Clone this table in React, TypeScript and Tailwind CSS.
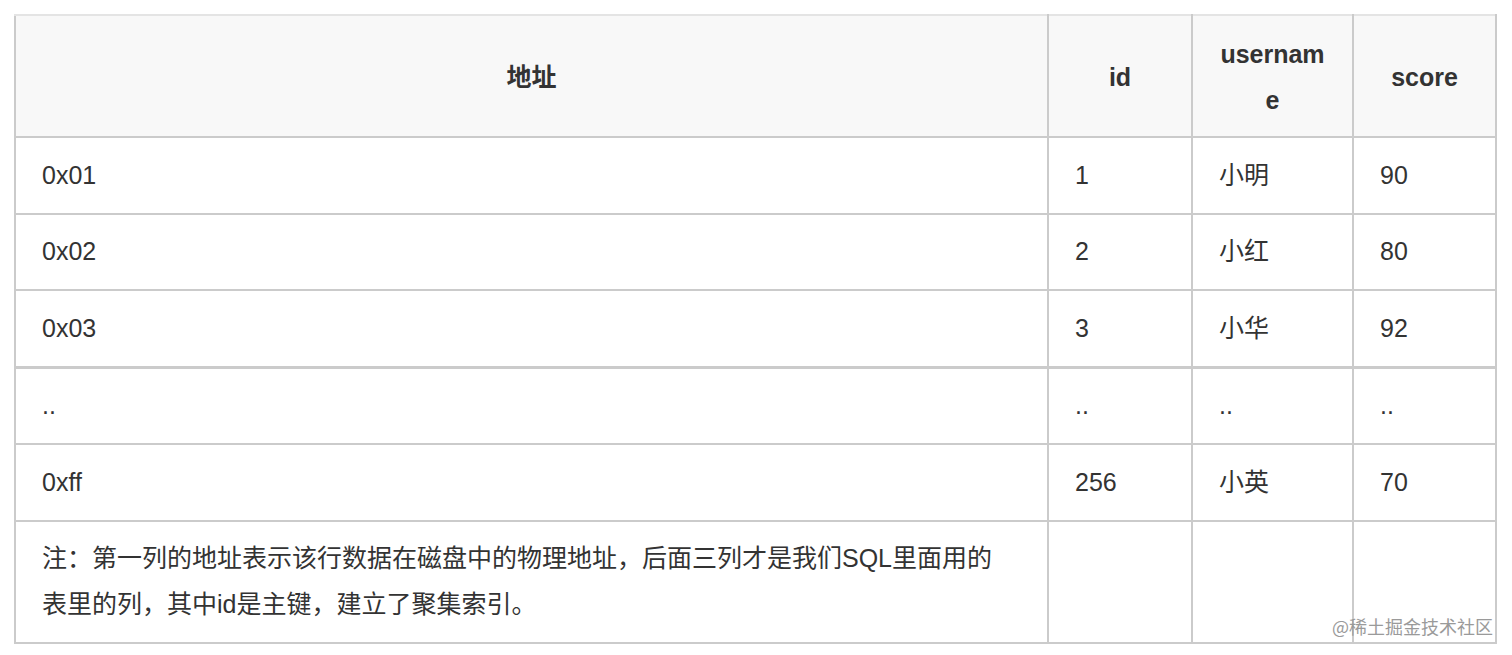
import React from "react";

const rows: [string, string, string, string][] = [
  ["0x01", "1", "小明", "90"],
  ["0x02", "2", "小红", "80"],
  ["0x03", "3", "小华", "92"],
  ["..", "..", "..", ".."],
  ["0xff", "256", "小英", "70"],
];

const td = "border-2 border-[#cbcbcb] px-[26px] py-[14.5px] align-middle";

export default function App() {
  return (
    <div
      className="relative min-h-[655px] w-[1512px] bg-white text-[#333333]"
      style={{ fontFamily: '"Liberation Sans", "Noto Sans CJK SC", sans-serif' }}
    >
      <div className="pl-[14px] pt-[14px]">
        <table className="w-[1481px] table-fixed border-collapse text-[25px] leading-[45.5px]">
          <colgroup>
            <col className="w-[1033px]" />
            <col className="w-[144px]" />
            <col className="w-[161px]" />
            <col className="w-[143px]" />
          </colgroup>
          <thead>
            <tr className="bg-[#f8f8f8]">
              <th className={`${td} border-t-[#e4e4e4] pt-[16px] pb-[13px] text-center font-bold`}>地址</th>
              <th className={`${td} border-t-[#e4e4e4] pt-[16px] pb-[13px] text-center font-bold`}>id</th>
              <th className={`${td} border-t-[#e4e4e4] pt-[16px] pb-[13px] break-all text-center font-bold`}>username</th>
              <th className={`${td} border-t-[#e4e4e4] pt-[16px] pb-[13px] text-center font-bold`}>score</th>
            </tr>
          </thead>
          <tbody>
            {rows.map((r, i) => (
              <tr key={i} className={i === 3 ? "border-t-[3px] border-[#cbcbcb]" : ""}>
                {r.map((c, j) => (
                  <td key={j} className={`${td} text-left`}>
                    {c}
                  </td>
                ))}
              </tr>
            ))}
            <tr>
              <td className={`${td} pr-[40px] text-left`}>
                注：第一列的地址表示该行数据在磁盘中的物理地址，后面三列才是我们SQL里面用的表里的列，其中id是主键，建立了聚集索引。
              </td>
              <td className={td}></td>
              <td className={td}></td>
              <td className={td}></td>
            </tr>
          </tbody>
        </table>
      </div>
      <div
        className="absolute left-[1332px] top-[614px] text-[18px] leading-[24px] text-[#9a9a9a]"
        style={{ fontFamily: '"Noto Sans CJK SC", sans-serif' }}
      >
        @稀土掘金技术社区
      </div>
    </div>
  );
}
